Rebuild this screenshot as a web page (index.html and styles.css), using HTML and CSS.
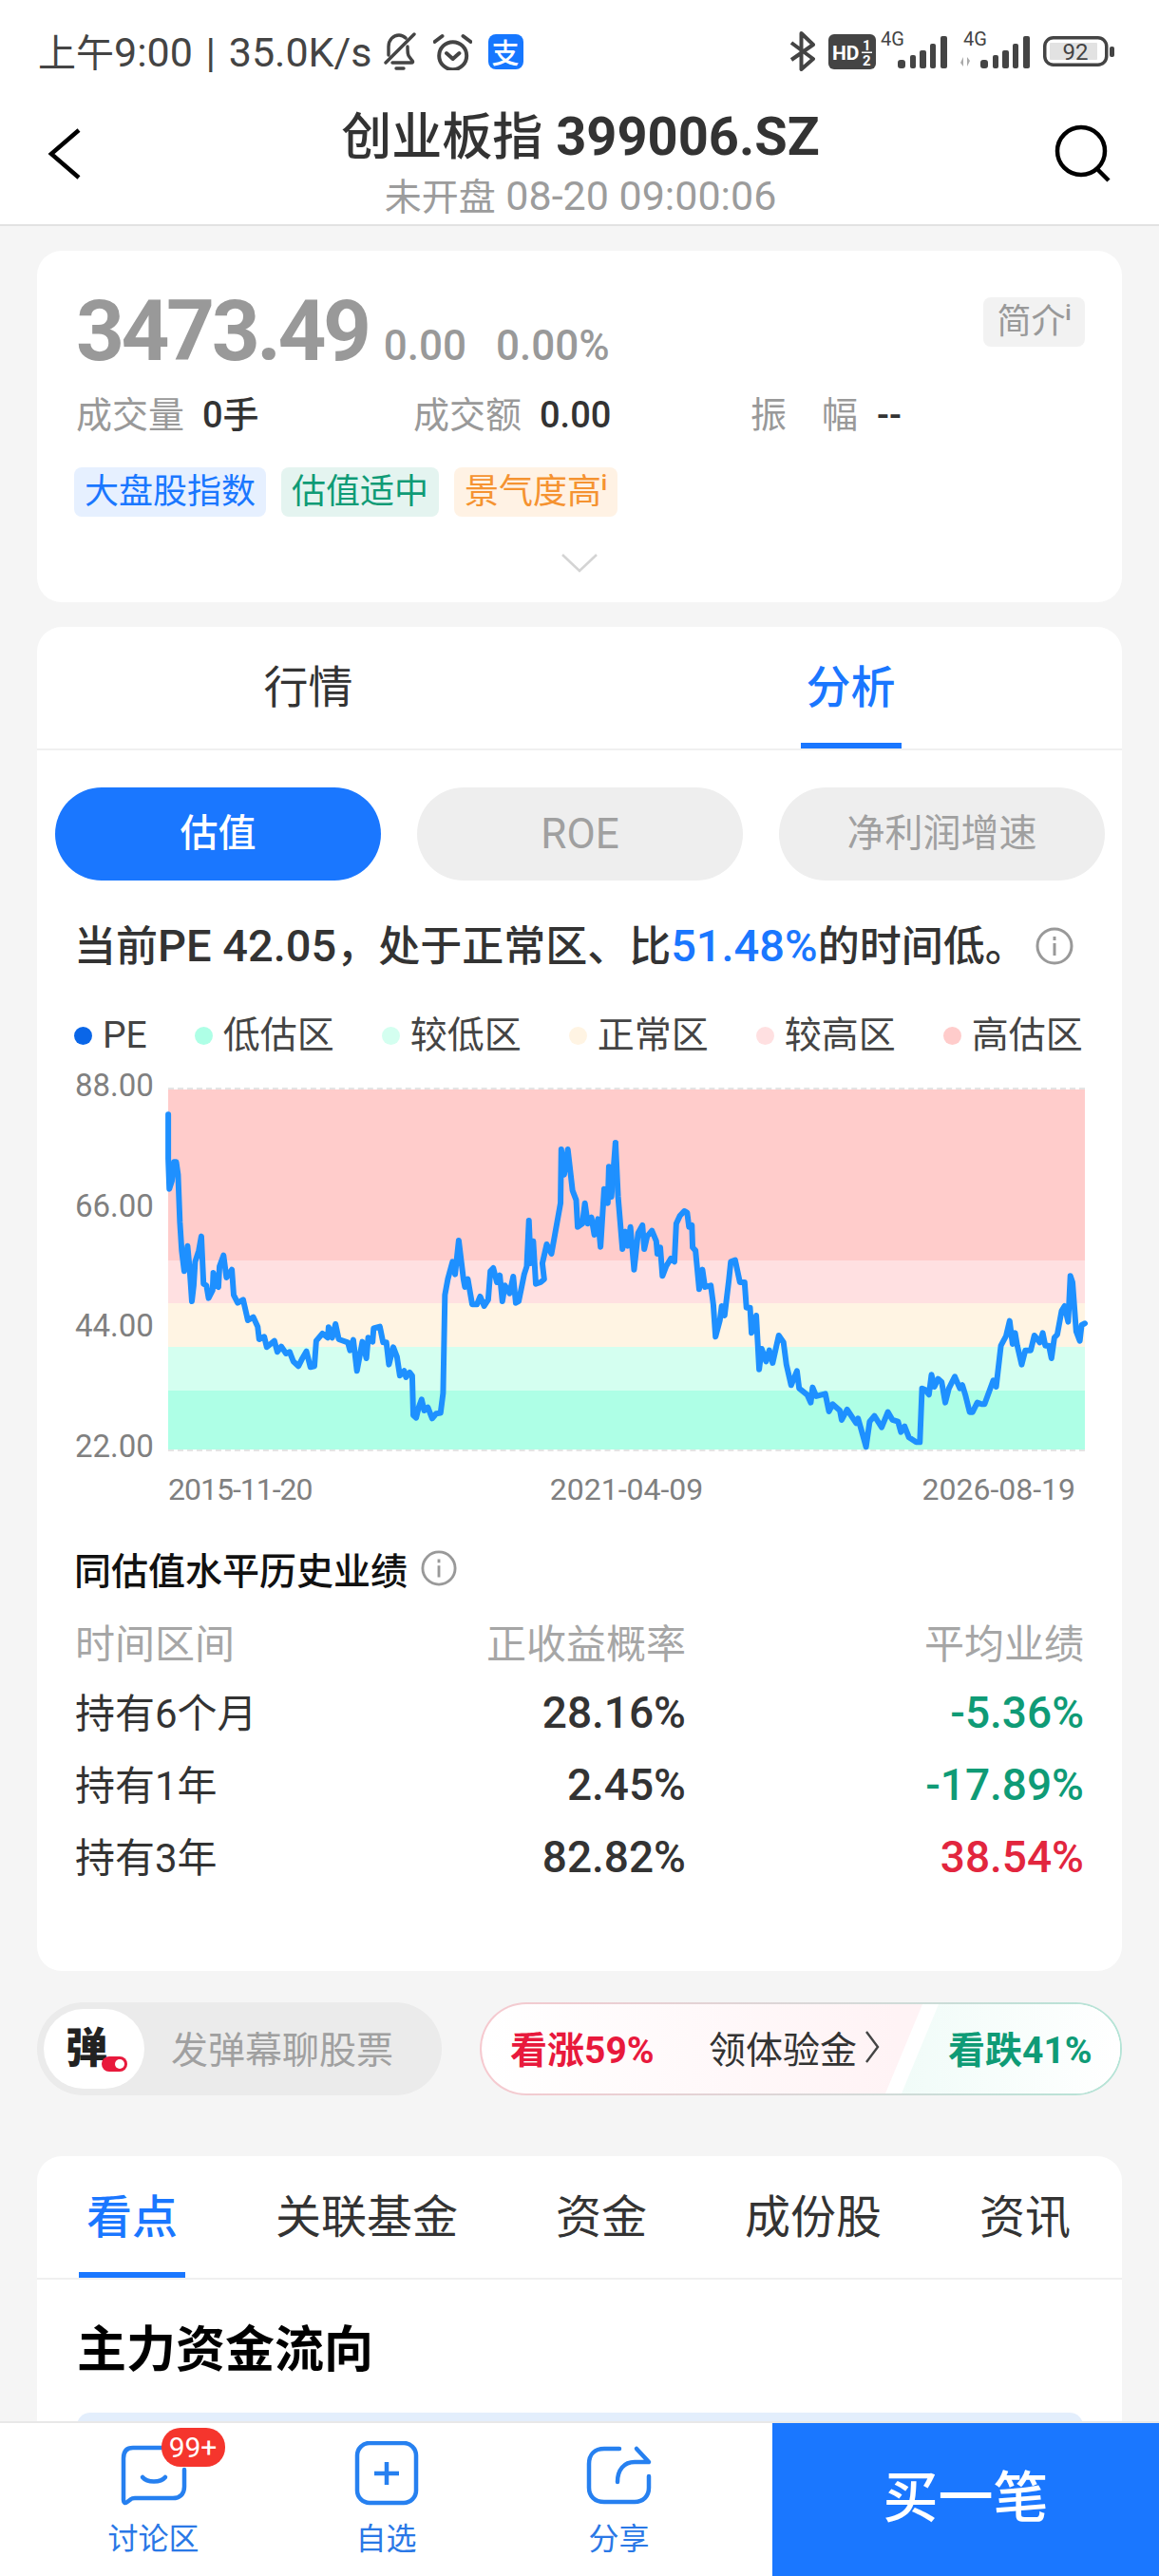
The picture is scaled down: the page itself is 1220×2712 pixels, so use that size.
FILE: index.html
```html
<!DOCTYPE html>
<html lang="zh-CN">
<head>
    <meta charset="UTF-8">
    <title>创业板指 399006.SZ</title>
    <link rel="stylesheet" href="styles.css">
</head>
<body>

<div class="phone">

<header class="top">
    <div class="status">
        <div class="status-left">
            <span class="clock"><span class="cjk">上午</span>9:00 | 35.0K/s</span>
            <svg class="ic-bell" viewBox="0 0 37 40" fill="none" stroke="#444" stroke-width="3.4" stroke-linecap="round" stroke-linejoin="round"><path d="M7 24V15C7 8 12 3 18 3c3 0 5 1 7 3M27 15c0 6 0 9 2 11l3 4c1 1 .5 2-1 2H11M34 2L4 32M15 38h8"/></svg>
            <svg class="ic-alarm" viewBox="0 0 41 39" fill="none" stroke="#444" stroke-width="4" stroke-linecap="round" stroke-linejoin="round"><circle cx="20.7" cy="23.7" r="14.5"/><path d="M1.5 9L9.5 3M39.5 9L31.5 3M14 21l6.7 6 6.7-6"/></svg>
            <span class="alipay">支</span>
        </div>
        <div class="status-right">
            <svg class="ic-bt" viewBox="0 0 28 42" fill="none" stroke="#444" stroke-width="4" stroke-linejoin="round"><path d="M3 12l23 17-12.500 11V2L26 14 3 30"/></svg>
            <svg class="ic-hd" viewBox="0 0 50 37"><rect width="50" height="37" rx="6" fill="#444"/><text x="4" y="27" class="hd-text">HD</text><text x="36" y="17" class="hd-small">1</text><rect x="35" y="18.500" width="11" height="1.500" fill="#fff"/><text x="36" y="33" class="hd-small">2</text></svg>
            <svg class="ic-sig" viewBox="0 -6 70 44" fill="#444"><text x="0" y="14" class="sig-text">4G</text><rect x="18" y="29" width="8" height="9" rx="3"/><rect x="31" y="24" width="6" height="14" rx="2"/><rect x="41" y="19" width="7" height="19" rx="2"/><rect x="52" y="12" width="6" height="26" rx="2"/><rect x="63" y="4" width="7" height="34" rx="2"/></svg>
            <svg class="ic-sig ic-sig2" viewBox="-4 -6 74 44" fill="#444"><text x="0" y="14" class="sig-text">4G</text><path d="M-3 26v10l-3-4zM1 36V26l3 4z" fill="#aaa" transform="translate(3 0)"/><rect x="18" y="29" width="8" height="9" rx="3"/><rect x="31" y="24" width="6" height="14" rx="2"/><rect x="41" y="19" width="7" height="19" rx="2"/><rect x="52" y="12" width="6" height="26" rx="2"/><rect x="63" y="4" width="7" height="34" rx="2"/></svg>
            <svg class="ic-batt" viewBox="0 0 76 32"><rect x="1.750" y="1.750" width="65" height="28.500" rx="9" fill="none" stroke="#444" stroke-width="3.500"/><rect x="7" y="7" width="50" height="18" rx="1" fill="#e2e2e2"/><rect x="70" y="11" width="5" height="11" rx="2" fill="#444"/><text x="34" y="24.500" text-anchor="middle" class="batt-text">92</text></svg>
        </div>
    </div>
    <div class="titlebar">
        <svg class="ic-back" viewBox="0 0 36 54" fill="none" stroke="#000" stroke-width="4.5"><path d="M33 2L4 27l29 25"/></svg>
        <div class="title-box">
            <div class="title"><span class="cjk-bold">创业板指</span> 399006.SZ</div>
            <div class="subtitle"><span class="cjk">未开盘</span> 08-20 09:00:06</div>
        </div>
        <svg class="ic-search" viewBox="0 0 62 62" fill="none" stroke="#000" stroke-width="4.5"><circle cx="28" cy="28" r="25"/><path d="M45 47l12 12"/></svg>
    </div>
</header>

<main class="main">

    <section class="card quote">
        <div class="quote-head">
            <div class="price-line">
                <span class="price">3473.49</span>
                <span class="chg">0.00</span>
                <span class="chg">0.00%</span>
            </div>
            <span class="intro-tag">简介<sup>i</sup></span>
        </div>
        <div class="stats">
            <div class="stat"><span class="stat-label">成交量</span><span class="stat-val">0手</span></div>
            <div class="stat"><span class="stat-label">成交额</span><span class="stat-val">0.00</span></div>
            <div class="stat"><span class="stat-label"><i>振</i><i>幅</i></span><span class="stat-val">--</span></div>
        </div>
        <div class="tags">
            <span class="tag tag-blue">大盘股指数</span>
            <span class="tag tag-green">估值适中</span>
            <span class="tag tag-orange">景气度高<sup>i</sup></span>
        </div>
        <svg class="ic-down" viewBox="0 0 38 20" fill="none" stroke="#d4d4d4" stroke-width="2.5"><path d="M1 1l18 17L37 1"/></svg>
    </section>

    <section class="card analysis">
        <div class="tabs-two">
            <div class="tab">行情</div>
            <div class="tab active">分析</div>
        </div>
        <div class="pills">
            <div class="pill on">估值</div>
            <div class="pill pill-latin">ROE</div>
            <div class="pill">净利润增速</div>
        </div>
        <div class="summary">
            <p>当前<span class="num">PE 42.05</span>，处于正常区、比<span class="num blue">51.48%</span>的时间低。</p>
            <svg class="ic-info" viewBox="0 0 40 40" fill="none" stroke="#999" stroke-width="3"><circle cx="20" cy="20" r="18"/><path d="M20 17v13M20 10v4"/></svg>
        </div>
        <div class="legend">
            <span class="lg"><i class="dot" style="background:#0a66e8"></i>PE</span>
            <span class="lg"><i class="dot" style="background:#aeffe6"></i>低估区</span>
            <span class="lg"><i class="dot" style="background:#d4fff0"></i>较低区</span>
            <span class="lg"><i class="dot" style="background:#fff4e3"></i>正常区</span>
            <span class="lg"><i class="dot" style="background:#ffe0e1"></i>较高区</span>
            <span class="lg"><i class="dot" style="background:#ffcccb"></i>高估区</span>
        </div>
        <div class="chart">
            <div class="y-axis">
                <span>88.00</span><span>66.00</span><span>44.00</span><span>22.00</span>
            </div>
            <div class="plot">
                <div class="band b1"></div>
                <div class="band b2"></div>
                <div class="band b3"></div>
                <div class="band b4"></div>
                <div class="band b5"></div>
                <svg class="pe-line" viewBox="0 0 965 383">
                    <g transform="translate(-117 -25) scale(.3827 .3333)">
                        <polyline vector-effect="non-scaling-stroke" points="306,160 306,300 309,395 316,370 322,310 328,310 333,350 338,500 343,590 350,655 359,575 365,650 371,750 376,700 380,625 390,590 397,545 403,695 411,700 417,740 428,715 430,660 437,700 444,705 447,640 458,605 466,675 481,650 486,730 497,755 512,745 525,810 540,800 552,830 556,870 570,862 577,895 598,875 606,910 617,893 630,915 640,910 650,940 664,955 675,930 686,908 697,958 708,955 713,875 730,852 745,865 747,832 757,865 766,822 775,870 800,880 806,905 815,872 825,970 840,878 851,930 856,865 868,878 871,835 888,830 897,880 906,880 913,950 925,895 935,925 943,985 955,970 960,990 970,975 977,985 980,1110 988,1118 995,1085 1003,1060 1010,1095 1020,1085 1032,1120 1043,1105 1055,1103 1062,1040 1067,730 1075,680 1088,625 1095,665 1105,558 1118,680 1122,705 1130,680 1142,760 1155,760 1164,735 1175,765 1186,745 1192,655 1200,645 1210,690 1218,668 1225,750 1232,700 1245,725 1255,672 1262,755 1270,750 1285,665 1292,640 1298,495 1303,630 1310,560 1317,695 1330,690 1340,680 1335,630 1347,570 1360,600 1385,440 1387,270 1395,350 1405,270 1418,400 1428,430 1432,515 1445,505 1452,440 1460,505 1470,485 1478,540 1488,490 1495,578 1505,395 1515,440 1518,325 1525,420 1536,250"/>
                    </g>
                    <g transform="translate(443 -25) scale(.3827 .3333)">
                        <polyline vector-effect="non-scaling-stroke" points="73,250 80,420 92,585 100,530 107,575 114,515 124,650 135,535 147,510 152,585 160,545 173,527 185,560 188,600 196,580 202,670 212,640 225,615 235,625 240,505 250,480 262,465 270,470 275,515 283,510 285,580 293,590 303,712 312,650 319,705 335,700 342,760 348,862 360,810 365,765 373,795 385,680 390,625 402,620 415,690 428,690 433,770 443,770 447,850 460,795 468,965 475,900 487,940 496,905 505,945 522,858 535,880 543,950 556,1015 572,970 578,1025 600,1045 610,1070 615,1022 625,1050 650,1042 660,1098 670,1075 690,1095 695,1125 710,1092 735,1135 740,1120 750,1160 762,1210 772,1130 785,1112 805,1148 822,1100 835,1125 850,1130 858,1163 868,1145 880,1180 900,1195 910,1195 916,1025 925,1030 935,1045 942,982 950,1020 960,995 970,1005 980,1070 990,1025 1006,988 1020,1025 1027,1015 1035,1045 1047,1100 1055,1100 1068,1070 1080,1075 1088,1075 1112,1000 1120,1020 1133,890 1147,860 1157,812 1165,885 1172,850 1178,890 1190,950 1200,905 1215,905 1225,858 1240,880 1248,850 1255,890 1265,890 1272,930 1280,865 1288,855 1300,780 1308,765 1318,815 1324,670 1330,690 1340,845 1350,875 1355,825 1364,820"/>
                    </g>
                </svg>
            </div>
        </div>
        <div class="x-axis">
            <span class="tight">2015-11-20</span><span class="mid">2021-04-09</span><span>2026-08-19</span>
        </div>
        <div class="perf-title">
            <span>同估值水平历史业绩</span>
            <svg class="ic-info" viewBox="0 0 40 40" fill="none" stroke="#999" stroke-width="3"><circle cx="20" cy="20" r="18"/><path d="M20 17v13M20 10v4"/></svg>
        </div>
        <table class="perf">
            <thead>
                <tr><th>时间区间</th><th>正收益概率</th><th>平均业绩</th></tr>
            </thead>
            <tbody>
                <tr><td>持有6个月</td><td>28.16%</td><td class="down">-5.36%</td></tr>
                <tr><td>持有1年</td><td>2.45%</td><td class="down">-17.89%</td></tr>
                <tr><td>持有3年</td><td>82.82%</td><td class="up">38.54%</td></tr>
            </tbody>
        </table>
    </section>

    <section class="social">
        <div class="danmu">
            <div class="danmu-badge"><span>弹</span><i class="danmu-toggle"></i></div>
            <span class="danmu-text">发弹幕聊股票</span>
        </div>
        <div class="vote">
            <div class="vote-inner">
                <span class="vote-up">看涨59%</span>
                <span class="vote-mid">领体验金</span>
                <svg class="ic-right" viewBox="0 0 16 36" fill="none" stroke="#444" stroke-width="2.4"><path d="M2 2l12 16L2 34"/></svg>
                <span class="vote-down">看跌41%</span>
            </div>
        </div>
    </section>

    <section class="card points">
        <div class="tabs-five">
            <div class="tab5 active">看点</div>
            <div class="tab5">关联基金</div>
            <div class="tab5">资金</div>
            <div class="tab5">成份股</div>
            <div class="tab5">资讯</div>
        </div>
        <h3 class="flow-title">主力资金流向</h3>
        <div class="flow-box"></div>
    </section>

</main>

<footer class="bottom">
    <div class="bottom-nav">
        <div class="nav-item">
            <div class="nav-icon">
                <svg viewBox="0 0 80 72" fill="none" stroke="#2680f0" stroke-width="4.5" stroke-linecap="round" stroke-linejoin="round"><path d="M50 7H18C11 7 8 11 8 18v44c0 3 2 4 4 2l4-3c1-1 2-1 4-1h40c7 0 12-4 12-12V30"/><path d="M28 38c5 6 19 6 24 0"/></svg>
                <span class="badge">99+</span>
            </div>
            <span class="nav-label">讨论区</span>
        </div>
        <div class="nav-item">
            <div class="nav-icon">
                <svg viewBox="0 0 80 72" fill="none" stroke="#2680f0" stroke-width="4.5"><rect x="9" y="2" width="62" height="63" rx="13"/><path d="M27 34h26M40 22v24"/></svg>
            </div>
            <span class="nav-label">自选</span>
        </div>
        <div class="nav-item">
            <div class="nav-icon">
                <svg viewBox="0 0 80 72" fill="none" stroke="#2680f0" stroke-width="4.5" stroke-linecap="round" stroke-linejoin="round"><path d="M40 8H24C14 8 8 14 8 24v25c0 9 6 15 16 15h32c9 0 15-6 15-15V37"/><path d="M58 8l13 14H56c-11 0-18 8-18 21"/></svg>
            </div>
            <span class="nav-label">分享</span>
        </div>
    </div>
    <div class="buy">买一笔</div>
</footer>

</div>

</body>
</html>
```

FILE: styles.css
```css
* {
    box-sizing: border-box;
}
html, body {
    margin: 0;
    padding: 0;
}
body {
    font-family: Roboto, "Noto Sans CJK SC", sans-serif;
    color: #333;
    background: #f5f5f5;
}
p, h3 {
    margin: 0;
}
i {
    font-style: normal;
}
.phone {
    position: relative;
    width: 1220px;
    height: 2712px;
    overflow: hidden;
}
.cjk {
    font-family: "Noto Sans CJK SC", sans-serif;
}

/* top */
.top {
    background: #fff;
    border-bottom: 2px solid #e2e2e2;
    height: 238px;
}
.status {
    height: 108px;
    padding: 0 46px 0 40px;
    display: flex;
    align-items: center;
    justify-content: space-between;
}
.status-left, .status-right {
    display: flex;
    align-items: center;
}
.clock {
    font-size: 43px;
    line-height: 50px;
    word-spacing: 3px;
    color: #444;
    white-space: nowrap;
}
.clock .cjk {
    font-size: 40px;
}
.ic-bell {
    width: 37px;
    height: 40px;
    margin-left: 10px;
}
.ic-alarm {
    width: 41px;
    height: 39px;
    margin-left: 17px;
}
.alipay {
    width: 37px;
    height: 37px;
    margin-left: 17px;
    background: #1677ff;
    border-radius: 8px;
    color: #fff;
    font-family: "Noto Sans CJK SC", sans-serif;
    font-size: 29px;
    font-weight: 500;
    line-height: 36px;
    text-align: center;
}
.ic-bt {
    width: 28px;
    height: 42px;
}
.ic-hd {
    width: 50px;
    height: 37px;
    margin-left: 14px;
}
.hd-text {
    font-size: 21px;
    font-weight: 700;
    fill: #fff;
}
.hd-small {
    font-size: 15px;
    font-weight: 700;
    fill: #fff;
}
.ic-sig {
    width: 70px;
    height: 44px;
    margin: -8px 0 0 5px;
}
.ic-sig2 {
    width: 74px;
    margin-left: 13px;
}
.sig-text {
    font-size: 20px;
}
.ic-batt {
    width: 76px;
    height: 32px;
    margin-left: 14px;
}
.batt-text {
    font-size: 24px;
    fill: #444;
}
.titlebar {
    height: 128px;
    display: grid;
    grid-template-columns: 1fr auto 1fr;
    align-items: start;
    padding: 0 48px 0 50px;
}
.ic-back {
    width: 36px;
    height: 54px;
    margin-top: 27px;
}
.title-box {
    text-align: center;
    margin-top: 2px;
}
.title {
    font-size: 56px;
    line-height: 60px;
    font-weight: 700;
    color: #333;
    white-space: nowrap;
}
.cjk-bold {
    font-family: "Noto Sans CJK SC", sans-serif;
    font-size: 53px;
    font-weight: 500;
}
.subtitle {
    font-size: 43px;
    line-height: 46px;
    margin-top: 7px;
    color: #9c9c9c;
    white-space: nowrap;
}
.subtitle .cjk {
    font-size: 39px;
}
.ic-search {
    width: 62px;
    height: 62px;
    justify-self: end;
    margin-top: 23px;
}

.main {
    padding: 26px 39px 0;
}
.card {
    background: #fff;
    border-radius: 26px;
}

/* quote card */
.quote {
    height: 370px;
    padding: 37px 39px 0 41px;
    display: flex;
    flex-direction: column;
}
.quote-head {
    display: flex;
    justify-content: space-between;
    align-items: flex-start;
    height: 96px;
}
.price-line {
    display: flex;
    align-items: baseline;
}
.price {
    font-size: 89px;
    line-height: 96px;
    letter-spacing: -3.5px;
    font-weight: 700;
    color: #999;
}
.chg {
    font-size: 44px;
    font-weight: 500;
    color: #999;
    margin-left: 16px;
}
.chg + .chg {
    margin-left: 31px;
}
.intro-tag {
    margin-top: 12px;
    width: 107px;
    height: 52px;
    background: #f2f2f2;
    border-radius: 8px;
    color: #999;
    font-size: 36px;
    line-height: 52px;
    text-align: center;
    white-space: nowrap;
}
sup {
    font-size: 22px;
    line-height: 0;
    vertical-align: 14px;
    font-weight: 700;
}
.stats {
    margin-top: 17px;
    height: 46px;
    display: grid;
    grid-template-columns: 355px 355px 300px;
}
.stat {
    display: flex;
    align-items: center;
    gap: 20px;
}
.stat-label {
    flex: none;
    width: 113px;
    display: flex;
    justify-content: space-between;
    font-size: 38px;
    line-height: 46px;
    color: #999;
    white-space: nowrap;
}
.stat-val {
    font-size: 38px;
    line-height: 46px;
    font-weight: 500;
    color: #333;
    white-space: nowrap;
}
.tags {
    margin-top: 32px;
    display: flex;
    gap: 16px;
    margin-left: -2px;
}
.tag {
    height: 52px;
    padding: 0 11px;
    border-radius: 8px;
    font-size: 36px;
    line-height: 52px;
    white-space: nowrap;
}
.tag-blue {
    background: #e6f0ff;
    color: #1a77ff;
}
.tag-green {
    background: #e4f4f0;
    color: #0f9b76;
}
.tag-orange {
    background: #fff2e4;
    color: #f59331;
}
.ic-down {
    flex: none;
    width: 38px;
    height: 20px;
    margin: 39px 0 0 511px;
}

/* analysis card */
.analysis {
    height: 1415px;
    margin-top: 26px;
}
.tabs-two {
    height: 130px;
    display: grid;
    grid-template-columns: 1fr 1fr;
    border-bottom: 2px solid #f0f0f0;
}
.tab {
    position: relative;
    font-size: 47px;
    line-height: 128px;
    text-align: center;
    color: #333;
}
.tab.active {
    color: #1a77ff;
    font-weight: 500;
}
.tab.active::after {
    content: "";
    position: absolute;
    left: 50%;
    bottom: 0;
    width: 106px;
    height: 6px;
    margin-left: -53px;
    background: #1a77ff;
}
.pills {
    margin-top: 39px;
    padding: 0 19px;
    display: grid;
    grid-template-columns: repeat(3, 343px);
    gap: 38px;
}
.pill {
    height: 98px;
    border-radius: 49px;
    background: #eee;
    color: #a0a0a0;
    font-size: 40px;
    line-height: 98px;
    text-align: center;
}
.pill.on {
    background: #1a77ff;
    color: #fff;
    font-weight: 500;
}
.pill-latin {
    font-size: 44px;
}
.summary {
    margin-top: 44px;
    padding: 0 51px 0 39px;
    display: flex;
    align-items: center;
    justify-content: space-between;
    height: 50px;
}
.summary p {
    font-size: 44px;
    line-height: 50px;
    font-weight: 500;
    white-space: nowrap;
}
.num {
    font-size: 47px;
}
.blue {
    color: #1a77ff;
}
.ic-info {
    width: 40px;
    height: 40px;
    flex: none;
}
.legend {
    margin-top: 47px;
    padding-left: 39px;
    display: flex;
    gap: 50px;
}
.lg {
    display: flex;
    align-items: center;
    gap: 11px;
    font-size: 39px;
    line-height: 44px;
    color: #444;
}
.dot {
    width: 19px;
    height: 19px;
    border-radius: 50%;
}
.chart {
    margin-top: 15px;
    padding-left: 40px;
    display: flex;
    align-items: flex-start;
}
.y-axis {
    width: 98px;
    height: 412px;
    display: flex;
    flex-direction: column;
    justify-content: space-between;
    font-size: 33px;
    line-height: 32px;
    color: #808080;
}
.plot {
    position: relative;
    width: 965px;
    height: 383px;
    margin-top: 18px;
    display: flex;
    flex-direction: column;
    border-top: 2px dashed #e4e4e4;
    border-bottom: 2px dashed #e4e4e4;
}
.band {
    flex: none;
}
.b1 { height: 180px; background: #ffcccb; }
.b2 { height: 45px; background: #ffe0e1; }
.b3 { height: 46px; background: #fff4e3; }
.b4 { height: 46px; background: #d4fff0; }
.b5 { height: 62px; background: #aeffe6; }
.pe-line {
    position: absolute;
    left: 0;
    top: -2px;
    width: 965px;
    height: 383px;
    overflow: visible;
}
.pe-line polyline {
    fill: none;
    stroke: #1e90ff;
    stroke-width: 6;
    stroke-linejoin: round;
    stroke-linecap: round;
}
.x-axis {
    margin-top: 11px;
    padding: 0 49px 0 138px;
    display: flex;
    justify-content: space-between;
    font-size: 32px;
    line-height: 36px;
    color: #808080;
}
.tight {
    letter-spacing: -1px;
}
.x-axis .mid {
    margin-left: 20px;
}
.perf-title {
    margin-top: 40px;
    padding-left: 39px;
    display: flex;
    align-items: center;
    gap: 14px;
    height: 50px;
    font-size: 39px;
    font-weight: 500;
    color: #111;
}
.perf-title .ic-info {
    width: 38px;
    height: 38px;
}
.perf {
    margin: 14px 0 0 40px;
    width: 1062px;
    border-collapse: collapse;
    table-layout: fixed;
}
.perf th, .perf td {
    height: 76px;
    padding: 0;
    text-align: right;
    font-size: 46px;
    font-weight: 400;
}
.perf th {
    height: 75px;
    font-size: 42px;
    color: #a6a6a6;
}
.perf th:first-child, .perf td:first-child {
    width: 300px;
    text-align: left;
    font-size: 42px;
}
.perf td:first-child {
    padding-bottom: 6px;
}
.perf th:nth-child(2) {
    width: 343px;
}
.perf td:nth-child(2) {
    font-weight: 500;
}
.perf .down {
    color: #0f9b76;
    font-weight: 500;
}
.perf .up {
    color: #e2263e;
    font-weight: 500;
}

/* danmu + vote */
.social {
    margin-top: 33px;
    display: flex;
    justify-content: space-between;
}
.danmu {
    width: 426px;
    height: 98px;
    padding-left: 7px;
    background: #ebebeb;
    border-radius: 49px;
    display: flex;
    align-items: center;
    gap: 28px;
}
.danmu-badge {
    position: relative;
    width: 106px;
    height: 84px;
    border-radius: 42px;
    background: #fff;
    color: #222;
    font-size: 44px;
    font-weight: 900;
    line-height: 84px;
    text-align: center;
}
.danmu-badge span {
    display: inline-block;
    margin-left: -16px;
}
.danmu-toggle {
    position: absolute;
    right: 18px;
    bottom: 18px;
    width: 27px;
    height: 16px;
    border-radius: 8px;
    background: #e8193c;
}
.danmu-toggle::after {
    content: "";
    position: absolute;
    right: 3px;
    top: 3px;
    width: 10px;
    height: 10px;
    border-radius: 50%;
    background: #fff;
}
.danmu-text {
    padding-bottom: 4px;
    font-size: 39px;
    color: #a0a0a0;
}
.vote {
    width: 676px;
    height: 98px;
    padding: 2px;
    border-radius: 49px;
    background: linear-gradient(90deg, #f6c9cf, #d8d8d8 55%, #b4e4d6);
}
.vote-inner {
    position: relative;
    height: 94px;
    padding-bottom: 4px;
    border-radius: 47px;
    overflow: hidden;
    background: linear-gradient(90deg, #fff 0%, #fff3f5 65%);
    display: flex;
    align-items: center;
    font-size: 39px;
    white-space: nowrap;
}
.vote-inner::before, .vote-inner::after {
    content: "";
    position: absolute;
    inset: 0;
}
.vote-inner::before {
    background: #fff;
    clip-path: polygon(464px 0, 100% 0, 100% 100%, 425px 100%);
}
.vote-inner::after {
    background: linear-gradient(90deg, #eefbf7 60%, #fff);
    clip-path: polygon(481px 0, 100% 0, 100% 100%, 442px 100%);
}
.vote-inner > * {
    position: relative;
    z-index: 1;
}
.vote-up {
    margin-left: 30px;
    width: 209px;
    color: #e8193c;
    font-weight: 700;
}
.vote-mid {
    color: #333;
}
.ic-right {
    width: 16px;
    height: 36px;
    margin-left: 8px;
}
.vote-down {
    position: absolute;
    left: 491px;
    color: #0f9b76;
    font-weight: 700;
}

/* bottom card */
.points {
    margin-top: 64px;
    height: 500px;
    overflow: hidden;
}
.tabs-five {
    height: 130px;
    padding-left: 52px;
    display: flex;
    gap: 103px;
    border-bottom: 2px solid #f0f0f0;
}
.tab5 {
    position: relative;
    font-size: 48px;
    line-height: 130px;
    color: #333;
}
.tab5.active {
    color: #1a77ff;
    font-weight: 500;
}
.tab5.active::after {
    content: "";
    position: absolute;
    left: -8px;
    right: -8px;
    bottom: 0;
    height: 6px;
    background: #1a77ff;
}
.flow-title {
    margin: 45px 0 0 42px;
    font-size: 52px;
    line-height: 60px;
    font-weight: 700;
    color: #000;
}
.flow-box {
    margin: 35px 41px 0 42px;
    height: 200px;
    background: #e3eefc;
    border-radius: 14px 14px 0 0;
}

/* bottom bar */
.bottom {
    position: absolute;
    left: 0;
    right: 0;
    bottom: 0;
    height: 163px;
    background: #fff;
    border-top: 2px solid #e8e8e8;
    display: flex;
}
.bottom-nav {
    width: 813px;
    padding: 0 39px;
    display: grid;
    grid-template-columns: repeat(3, 245px);
}
.nav-item {
    display: flex;
    flex-direction: column;
    align-items: center;
    padding-top: 19px;
}
.nav-icon {
    position: relative;
    width: 80px;
    height: 72px;
}
.nav-icon svg {
    width: 80px;
    height: 72px;
    display: block;
}
.badge {
    position: absolute;
    left: 48px;
    top: -14px;
    width: 67px;
    height: 41px;
    border-radius: 20px;
    background: #f5352d;
    color: #fff;
    font-size: 30px;
    line-height: 41px;
    text-align: center;
}
.nav-label {
    margin-top: 13px;
    font-size: 32px;
    line-height: 36px;
    color: #2a78e6;
}
.buy {
    width: 407px;
    background: #1a77ff;
    color: #fff;
    font-size: 58px;
    font-weight: 500;
    line-height: 159px;
    text-align: center;
}
```
